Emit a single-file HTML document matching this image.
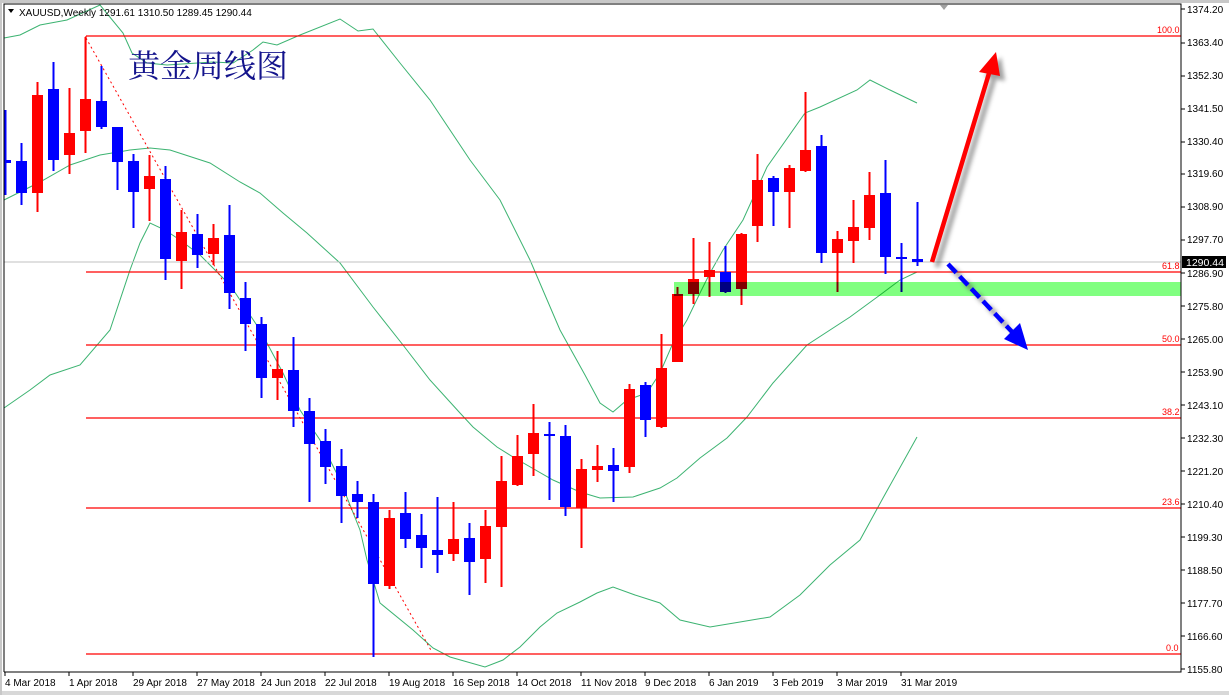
<!DOCTYPE html>
<html><head><meta charset="utf-8"><style>
html,body{margin:0;padding:0;background:#fff;width:1229px;height:695px;overflow:hidden}
svg{display:block}
text{font-family:"Liberation Sans","DejaVu Sans",sans-serif;font-size:10px;fill:#000}
</style></head><body>
<svg id="s" width="1229" height="695" xmlns="http://www.w3.org/2000/svg">
<rect x="0" y="0" width="1229" height="695" fill="#fff"/>
<rect x="0" y="0" width="1229" height="3" fill="#c8c8c8"/>
<rect x="0" y="691" width="1229" height="4" fill="#d8d8d8"/>
<rect x="0" y="0" width="2" height="695" fill="#c8c8c8"/>
<g id="bands" fill="none" stroke="#3cb371" stroke-width="1"></g>
<g stroke="#ff0000" stroke-width="1.2">
<line x1="86" y1="36" x2="1181" y2="36"/>
<line x1="86" y1="36" x2="86" y2="100"/>
<line x1="86" y1="272" x2="1181" y2="272"/>
<line x1="86" y1="345" x2="1181" y2="345"/>
<line x1="86" y1="418" x2="1181" y2="418"/>
<line x1="86" y1="508" x2="1181" y2="508"/>
<line x1="86" y1="654" x2="1181" y2="654"/>
</g>
<line x1="4" y1="262" x2="1181" y2="262" stroke="#c0c0c0" stroke-width="1"/>
<line x1="86" y1="38" x2="432" y2="652" stroke="#ff0000" stroke-width="1" stroke-dasharray="2,3"/>
<g id="candles"></g>
<rect x="674" y="282" width="507" height="14" fill="#80ff80" style="mix-blend-mode:multiply"/>
<g>
<text x="1157" y="33" style="fill:#ff0000;font-size:9px">100.0</text>
<text x="1162" y="269" style="fill:#ff0000;font-size:9px">61.8</text>
<text x="1162" y="342" style="fill:#ff0000;font-size:9px">50.0</text>
<text x="1162" y="415" style="fill:#ff0000;font-size:9px">38.2</text>
<text x="1162" y="505" style="fill:#ff0000;font-size:9px">23.6</text>
<text x="1166" y="651" style="fill:#ff0000;font-size:9px">0.0</text>
</g>
<text x="128" y="77" style="font-family:'Noto Serif CJK SC',serif;font-size:32px;fill:#14148c;font-weight:normal">黄金周线图</text>
<defs><filter id="sh" x="-50%" y="-50%" width="200%" height="200%"><feGaussianBlur stdDeviation="2"/></filter></defs>
<g transform="translate(5,5)" filter="url(#sh)" opacity="0.55">
<line x1="932" y1="262" x2="990" y2="70" stroke="#555" stroke-width="5"/>
<polygon points="996,52 979,72 1000,76" fill="#555"/>
<line x1="948" y1="264" x2="1015" y2="335" stroke="#555" stroke-width="5" stroke-dasharray="12,5"/>
</g>
<line x1="932" y1="262" x2="990" y2="70" stroke="#ff0000" stroke-width="4.5"/>
<polygon points="996,52 979,72 1000,76" fill="#ff0000"/>
<line x1="948" y1="264" x2="1015" y2="335" stroke="#0000ff" stroke-width="4.5" stroke-dasharray="12,5"/>
<polygon points="1028,350 1004,339 1020,323" fill="#0000ff"/>
<polyline points="4,672 4,4 1181,4 1181,672 4,672" fill="none" stroke="#000" stroke-width="1"/>
<polygon points="940,5 948,5 944,10" fill="#a0a0a0"/>
<polygon points="8,9 14,9 11,13" fill="#000"/>
<text x="19" y="16" style="font-size:10px">XAUUSD,Weekly  1291.61 1310.50 1289.45 1290.44</text>
<g id="axis"></g>
<rect x="1182" y="256" width="44" height="12" fill="#000"/>
<text x="1186" y="266" style="fill:#fff;font-size:10.5px">1290.44</text>
<g style="font-size:10px">
<text x="1187" y="13">1374.20</text><text x="1187" y="46">1363.40</text><text x="1187" y="79">1352.30</text>
<text x="1187" y="112">1341.50</text><text x="1187" y="145">1330.40</text><text x="1187" y="177">1319.60</text>
<text x="1187" y="210">1308.90</text><text x="1187" y="243">1297.70</text><text x="1187" y="277">1286.90</text>
<text x="1187" y="310">1275.80</text><text x="1187" y="343">1265.00</text><text x="1187" y="376">1253.90</text>
<text x="1187" y="409">1243.10</text><text x="1187" y="442">1232.30</text><text x="1187" y="475">1221.20</text>
<text x="1187" y="508">1210.40</text><text x="1187" y="541">1199.30</text><text x="1187" y="574">1188.50</text>
<text x="1187" y="607">1177.70</text><text x="1187" y="640">1166.60</text><text x="1187" y="673">1155.80</text>
</g>
<g style="font-size:10px">
<text x="5" y="686">4 Mar 2018</text><text x="69" y="686">1 Apr 2018</text><text x="133" y="686">29 Apr 2018</text>
<text x="197" y="686">27 May 2018</text><text x="261" y="686">24 Jun 2018</text><text x="325" y="686">22 Jul 2018</text>
<text x="389" y="686">19 Aug 2018</text><text x="453" y="686">16 Sep 2018</text><text x="517" y="686">14 Oct 2018</text>
<text x="581" y="686">11 Nov 2018</text><text x="645" y="686">9 Dec 2018</text><text x="709" y="686">6 Jan 2019</text>
<text x="773" y="686">3 Feb 2019</text><text x="837" y="686">3 Mar 2019</text><text x="901" y="686">31 Mar 2019</text>
</g>
</svg>
<script>
var NS="http://www.w3.org/2000/svg";
function el(t,a,p){var e=document.createElementNS(NS,t);for(var k in a)e.setAttribute(k,a[k]);p.appendChild(e);return e;}
var C=[
["b",110,195,160,163],["b",143,205,161,193],["r",82,212,95,193],["b",62,171,89,160],["r",88,174,133,155],
["r",37,153,99,131],["b",66,129,101,127],["b",127,190,127,162],["b",154,228,161,192],["r",155,221,176,189],
["b",166,280,179,259],["r",210,289,232,261],["b",214,268,234,255],["r",224,265,238,254],["b",205,309,235,293],
["b",282,351,298,324],["b",317,398,324,378],["r",351,400,369,378],["b",337,427,370,411],["b",398,502,411,444],
["b",429,484,441,467],["b",449,523,466,496],["b",481,518,494,502],["b",494,657,502,584],["r",510,589,518,586],
["b",492,548,513,539],["b",514,568,535,548],["b",497,573,550,555],["r",502,561,539,554],["b",523,595,538,562],
["r",510,583,526,559],["r",456,587,481,527],["r",435,486,456,485],["r",404,476,433,454],["b",422,500,434,436],
["b",425,516,436,507],["r",459,548,469,508],["r",445,482,466,470],["b",448,502,465,471],["r",384,473,389,467],
["b",382,437,385,420],["r",334,428,368,427],["r",287,362,294,362],["r",238,304,279,294],["r",242,297,270,277],
["b",246,293,272,292],["r",233,305,234,289],["r",154,242,180,226],["b",176,226,178,192],["r",165,228,168,192],
["r",92,172,150,171],["b",135,263,146,253],["r",231,292,239,253],["r",200,263,227,241],["r",172,240,195,228],
["b",160,274,193,257],["b",243,292,257,259],["b",202,266,259,262]];
var g=document.getElementById("candles");
C.forEach(function(c,k){var x=5+16*k,col=c[0]=="r"?"#ff0000":"#0000ff";
el("rect",{x:x-0.5,y:c[1],width:2,height:c[2]-c[1],fill:col},g);
var h=Math.max(c[4]-c[3],2);
el("rect",{x:k==0?4:x-5,y:c[3],width:k==0?7:11,height:h,fill:col},g);});
var B=[
"4,38 20,35 40,25 67,20 100,5 123,33 132,53 147,63 167,65 213,62 233,63 253,50 263,42 277,45 300,35 340,19 358,31 373,29 400,63 430,100 470,160 500,200 530,260 560,330 585,375 600,403 613,412 627,400 647,393 660,373 673,343 687,320 700,293 710,273 723,250 743,220 767,167 805,113 820,107 857,90 870,80 890,90 917,103",
"4,200 40,182 70,165 100,155 130,150 150,148 170,150 210,163 240,182 260,193 283,213 307,233 340,263 373,307 403,345 430,380 460,413 473,427 497,447 513,457 553,480 580,492 600,498 633,497 660,488 677,478 700,458 727,438 747,417 773,383 807,345 850,317 880,295 900,280 917,272",
"4,408 30,390 50,375 80,365 110,330 130,270 140,243 150,223 165,230 180,240 200,255 230,285 260,330 283,373 300,410 320,440 340,480 360,530 367,560 380,603 413,630 433,648 450,657 485,667 503,660 520,647 540,627 557,613 580,602 597,593 613,587 635,595 660,603 680,620 710,627 740,622 770,617 800,595 830,565 860,540 883,498 917,437"];
var bg=document.getElementById("bands");
B.forEach(function(p){el("polyline",{points:p},bg);});
var ax=document.getElementById("axis");
[9,43,76,109,142,174,207,240,273,306,339,372,405,438,471,504,537,570,603,636,669].forEach(function(y){el("line",{x1:1181,y1:y,x2:1185,y2:y,stroke:"#000"},ax);});
for(var i=0;i<15;i++){var x=5+64*i;el("line",{x1:x,y1:672,x2:x,y2:676,stroke:"#000"},ax);}
</script>
</body></html>
